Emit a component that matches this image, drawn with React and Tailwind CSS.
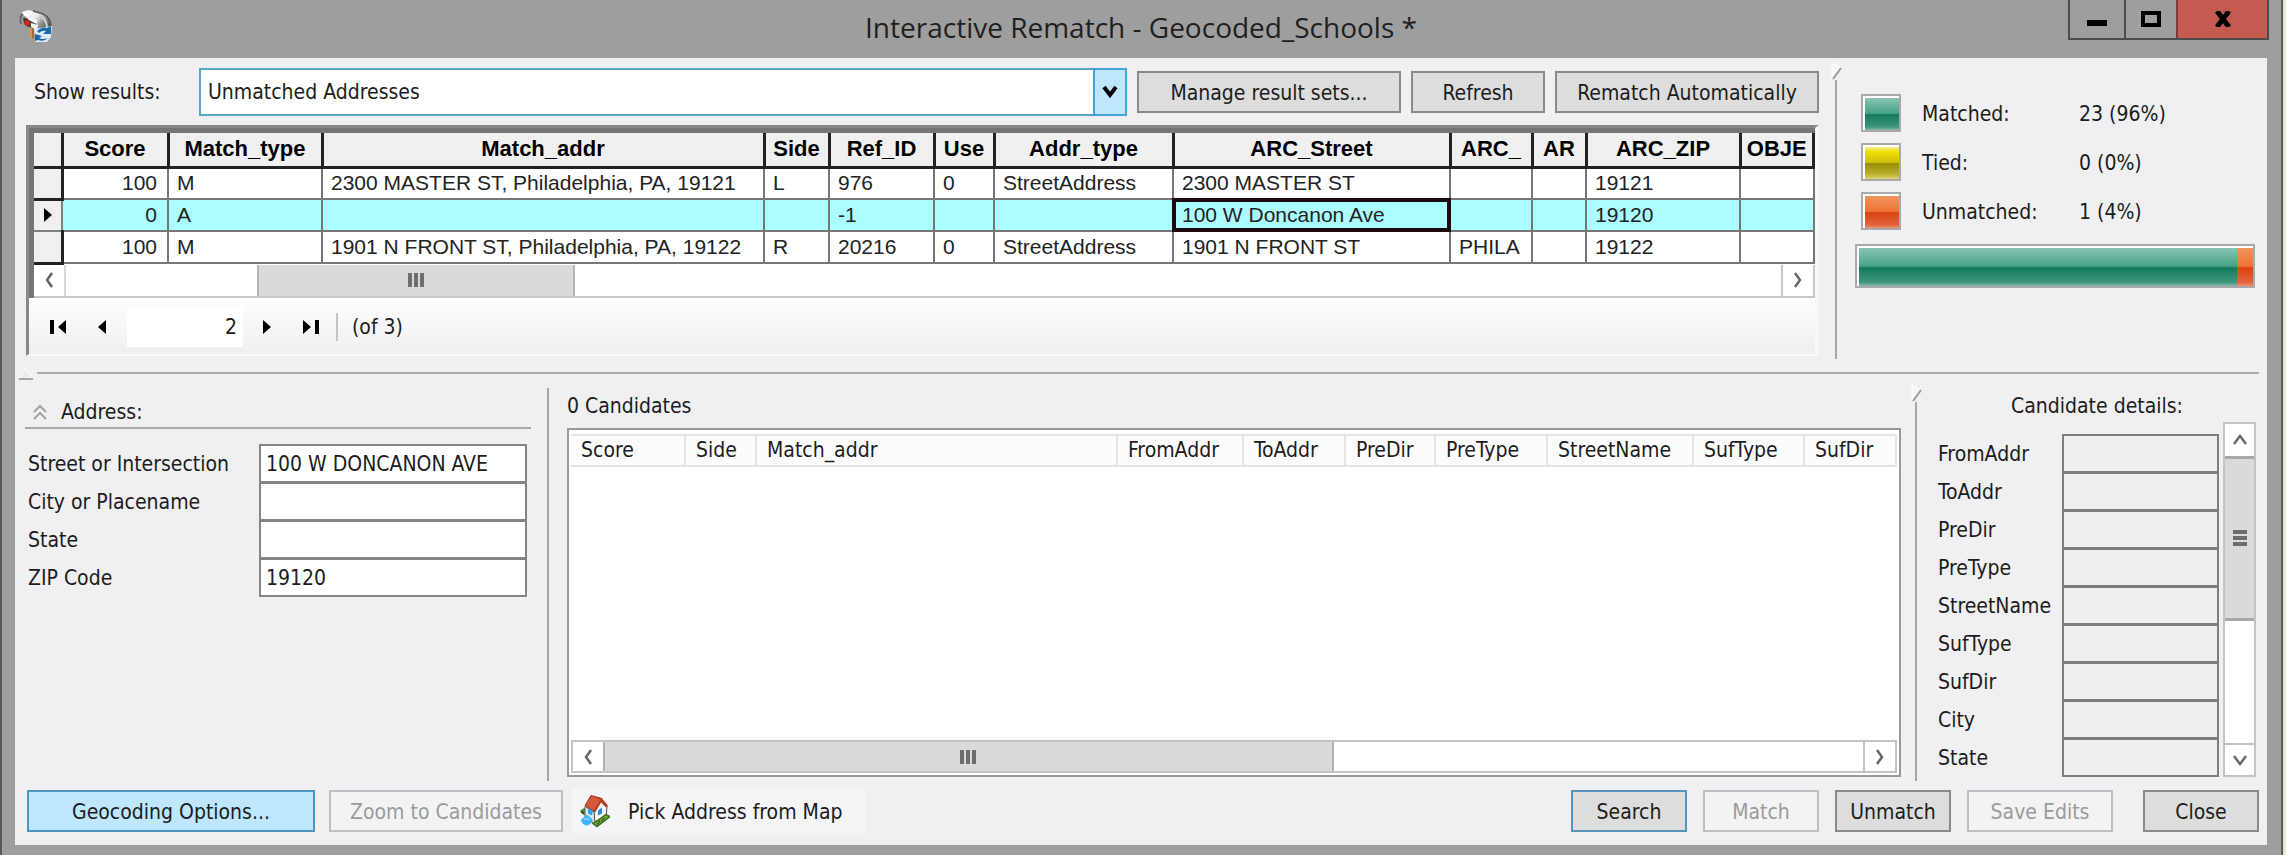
import React from "react";

const ui = "font-['DejaVu_Sans_Condensed','DejaVu_Sans',sans-serif]";

const COLUMNS = [
  { label: "Score", width: "w-[106px]" },
  { label: "Match_type", width: "w-[154px]" },
  { label: "Match_addr", width: "w-[442px]" },
  { label: "Side", width: "w-[65px]" },
  { label: "Ref_ID", width: "w-[105px]" },
  { label: "Use", width: "w-[60px]" },
  { label: "Addr_type", width: "w-[179px]" },
  { label: "ARC_Street", width: "w-[277px]" },
  { label: "ARC_", width: "w-[82px]" },
  { label: "AR", width: "w-[54px]" },
  { label: "ARC_ZIP", width: "w-[154px]" },
  { label: "OBJE", width: "" },
];

const ROWS = [
  ["100", "M", "2300 MASTER ST, Philadelphia, PA, 19121", "L", "976", "0", "StreetAddress", "2300 MASTER ST", "", "", "19121", ""],
  ["0", "A", "", "", "-1", "", "", "100 W Doncanon Ave", "", "", "19120", ""],
  ["100", "M", "1901 N FRONT ST, Philadelphia, PA, 19122", "R", "20216", "0", "StreetAddress", "1901 N FRONT ST", "PHILA", "", "19122", ""],
];

const CANDIDATE_COLUMNS = [
  { label: "Score", width: "w-[114px]" },
  { label: "Side", width: "w-[71px]" },
  { label: "Match_addr", width: "" },
  { label: "FromAddr", width: "w-[126px]" },
  { label: "ToAddr", width: "w-[102px]" },
  { label: "PreDir", width: "w-[90px]" },
  { label: "PreType", width: "w-[112px]" },
  { label: "StreetName", width: "w-[146px]" },
  { label: "SufType", width: "w-[111px]" },
  { label: "SufDir", width: "w-[92px]" },
];

const DETAILS = ["FromAddr", "ToAddr", "PreDir", "PreType", "StreetName", "SufType", "SufDir", "City", "State"];

const ADDRESS_FIELDS = [
  { id: "street", label: "Street or Intersection", value: "100 W DONCANON AVE" },
  { id: "city", label: "City or Placename", value: "" },
  { id: "state", label: "State", value: "" },
  { id: "zip", label: "ZIP Code", value: "19120" },
];

const GREEN = "bg-[linear-gradient(to_bottom,#8ac2b3_0%,#45a387_48%,#14795e_52%,#3d967e_90%,#86b9aa_100%)]";
const YELLOW = "bg-[linear-gradient(to_bottom,#f0ee90_0%,#efdf08_14%,#cfbf0c_48%,#978c06_52%,#bdb02a_85%,#dcd47c_100%)]";
const ORANGE = "bg-[linear-gradient(to_bottom,#f0945c_0%,#ef7434_48%,#da4312_52%,#e4633a_90%,#ea9070_100%)]";

const STATS = [
  { label: "Matched:", value: "23 (96%)", fill: GREEN },
  { label: "Tied:", value: "0 (0%)", fill: YELLOW },
  { label: "Unmatched:", value: "1 (4%)", fill: ORANGE },
];

const BUTTON_TONES = {
  normal: "border-[#8a8a8a] bg-[#dddddd]",
  primary: "border-[#5994ba] bg-[#dddddd]",
  hot: "border-[#4f93bf] bg-[#bee6fd]",
};

function MailboxIcon() {
  return (
    <svg viewBox="0 0 34 34" className="h-[34px] w-[34px]" aria-hidden="true">
      <defs>
        <linearGradient id="mailbox-body" x1="0" y1="0" x2="1" y2="0.7">
          <stop offset="0" stopColor="#ffffff" />
          <stop offset="0.45" stopColor="#ececec" />
          <stop offset="0.75" stopColor="#8a8a8a" />
          <stop offset="1" stopColor="#4a4a4a" />
        </linearGradient>
      </defs>
      <path d="M10 18 H16 V30 L10 28 Z" fill="#c99a5c" />
      <path d="M13 18 H16 V30 L13 29 Z" fill="#a06f38" />
      <path d="M4 3 Q8 0 14 2 L24 5 Q33 9 32 21 L31 23 L17 21 L9 16 Q10 8 4 3 Z" fill="url(#mailbox-body)" />
      <path d="M14 2 L24 5 Q33 9 32 21" fill="none" stroke="#5a5a5a" strokeWidth="1.500" />
      <path d="M23 8 Q28 12 28 19" fill="none" stroke="#d5d5d5" strokeWidth="2" />
      <path d="M3 4 Q8 5 10 10 L18 13" fill="none" stroke="#ffffff" strokeWidth="3" />
      <path d="M2 15 Q0 7 4 5" fill="none" stroke="#6a6a6a" strokeWidth="2" />
      <path d="M4 9 Q8 8 10 11 L17 15 L16 19 L9 18 L5 15 Z" fill="#4b4140" />
      <path d="M12 14 L19 16 L18 21 L12 18 Z" fill="#f2f2f2" />
      <circle cx="8" cy="14" r="2.500" fill="#e3221a" />
      <path d="M15 20 L33 17 L32 28 L28 33 L16 33 Z" fill="#dcebf6" />
      <path d="M18 22 Q23 17 28 19 L32 17 V25 H24 L27 22 Q23 21 20 24 Z" fill="#2068ac" />
      <path d="M16 25 L23 27 L20 29 Q24 31 29 29 Q25 33 19 31 L16 32 Z" fill="#1b64ab" />
    </svg>
  );
}

function HouseIcon() {
  return (
    <svg viewBox="0 0 30 33" className="h-[34px] w-[30px]" aria-hidden="true">
      <path d="M0 16 L5 13 L8 19 L4 21 Z" fill="#55902d" />
      <path d="M1 17 L4 19" stroke="#275213" strokeWidth="2" />
      <path d="M5 12 L15 18 L16 30 L5 24 Z" fill="#dfe6ec" stroke="#666" strokeWidth="1" />
      <path d="M14 17 L21 6 L27 12 L26 23 L15 29 Z" fill="#f7f7f8" stroke="#4a4a4a" strokeWidth="1" />
      <path d="M5 11 L11 1 L22 4 L15 17 Z" fill="#d9583a" stroke="#96351d" strokeWidth="1" />
      <path d="M11 1 L22 4 L28 11 L26 13 L21 8 L15 18 L14 16 L20 5 Z" fill="#b23f26" />
      <path d="M18 16 L22 13 L22 19 L18 21 Z" fill="#2a8ede" />
      <path d="M8 14 L13 16 L12 21 L8 19 Z" fill="#2f9fe6" />
      <path d="M13 29 L26 20 L30 22 L17 32 Z" fill="#6fa838" stroke="#3c6b20" strokeWidth="1.500" />
      <path d="M17 30 L20 26 M22 27 L24 23" stroke="#3c6b20" strokeWidth="1.500" />
      <path d="M7 20 Q11 23 13 26 Q10 31 6 31 Q1 29 1 25 Z" fill="#3bb4fa" />
      <path d="M4 25 Q8 23 9 26" fill="none" stroke="#7dd2ff" strokeWidth="2" />
    </svg>
  );
}

function Arrow({ d, label }) {
  return (
    <svg viewBox="0 0 16 16" className="h-4 w-4" role="img" aria-label={label}>
      <path d={d} fill="none" stroke="#666" strokeWidth="2.500" />
    </svg>
  );
}

const LEFT = "M11 1 L6 8 L11 15";
const RIGHT = "M5 1 L10 8 L5 15";
const UP = "M2 12 L8 4 L14 12";
const DOWN = "M2 4 L8 12 L14 4";

function Button({ children, className, tone = "normal", ...props }) {
  return (
    <button
      type="button"
      className={`h-[42px] shrink-0 border-2 pt-[2px] text-center whitespace-nowrap disabled:border-[#bcc0c2] disabled:bg-[#f3f3f4] disabled:text-[#9b9b9b] ${BUTTON_TONES[tone]} ${className}`}
      {...props}
    >
      {children}
    </button>
  );
}

function VerticalSplitter({ arrow }) {
  return (
    <div className="flex w-3 shrink-0 flex-col items-center">
      {arrow && (
        <svg viewBox="0 0 12 18" className="h-[18px] w-3" aria-hidden="true">
          <path d="M2 1 L11 6 L2 17 Z" fill="#f6f6f6" stroke="#fff" strokeWidth="1" />
          <path d="M11 6 L3 17" stroke="#9a9a9a" strokeWidth="2" />
        </svg>
      )}
      <div className="w-[2px] grow bg-[#a6a6a6]" />
    </div>
  );
}

function Grip({ vertical }) {
  return (
    <span className={vertical ? "flex flex-col gap-[2px]" : "flex gap-[2px]"}>
      {[0, 1, 2].map((i) => (
        <span key={i} className={vertical ? "h-1 w-[14px] bg-[#6d6d6d]" : "h-[14px] w-1 bg-[#6d6d6d]"} />
      ))}
    </span>
  );
}

function TitleBar() {
  return (
    <header className="flex h-[58px] items-start pr-3">
      <div className="w-[212px] pt-[9px] pl-[17px]">
        <MailboxIcon />
      </div>
      <h1 className="grow pt-[3px] text-center font-['Open_Sans',sans-serif] text-[28px] leading-[48px] text-[#1f1f1f]">
        Interactive Rematch - Geocoded_Schools *
      </h1>
      <div className="flex h-10 w-[201px] border-2 border-t-0 border-[#4c4c4c]">
        <button type="button" aria-label="Minimize" className="flex w-14 items-center justify-center border-r-2 border-[#4c4c4c]">
          <span className="mt-2 h-[6px] w-5 bg-black" />
        </button>
        <button type="button" aria-label="Maximize" className="flex w-[52px] items-center justify-center border-r-2 border-[#7a3a36]">
          <span className="h-4 w-5 border-4 border-black" />
        </button>
        <button type="button" aria-label="Close window" className="flex grow items-center justify-center bg-[#c55a50]">
          <svg viewBox="0 0 18 16" className="h-4 w-[18px]" aria-hidden="true">
            <path d="M3 0 L15 16 M15 0 L3 16" stroke="#000" strokeWidth="5" />
          </svg>
        </button>
      </div>
    </header>
  );
}

function Toolbar() {
  return (
    <div className="flex h-12 items-center gap-[10px] pl-2">
      <label htmlFor="results" className="w-[155px] shrink-0">Show results:</label>
      <div className="relative h-12 grow">
        <select id="results" className="h-full w-full appearance-none border-2 border-[#55a8cc] bg-white pl-[7px] outline-none">
          <option>Unmatched Addresses</option>
        </select>
        <span className="pointer-events-none absolute inset-y-0 right-0 flex w-[34px] items-center justify-center border-2 border-[#42a5dc] bg-[#bee6fd]">
          <svg viewBox="0 0 16 14" className="h-[14px] w-4" aria-hidden="true">
            <path d="M2 2 L8 10 L14 2" fill="none" stroke="#000" strokeWidth="4" />
          </svg>
        </span>
      </div>
      <Button className="w-[264px]">Manage result sets...</Button>
      <Button className="w-[134px]">Refresh</Button>
      <Button className="w-[264px]">Rematch Automatically</Button>
    </div>
  );
}

function ResultsTable() {
  return (
    <table className="w-full table-fixed border-collapse bg-white font-['Liberation_Sans',Arial,sans-serif] text-[21px] leading-[28px] text-[#222]">
      <thead>
        <tr className="h-[34px]">
          <th className="w-7 border-r-3 border-b-3 border-[#222] bg-[#f0f0f0]" aria-label="Row" />
          {COLUMNS.map((c) => (
            <th
              key={c.label}
              scope="col"
              className={`${c.width} border-r-3 border-b-3 border-[#222] bg-[#f0f0f0] p-0 text-center text-[22px] font-bold whitespace-nowrap text-black`}
            >
              {c.label}
            </th>
          ))}
        </tr>
      </thead>
      <tbody>
        {ROWS.map((row, r) => (
          <tr key={r} className="h-8">
            <th
              scope="row"
              className={
                r === 1
                  ? "border-r-2 border-b-2 border-[#808080] bg-[#f0f0f0] p-0"
                  : "border-r-3 border-b-3 border-[#222] bg-[#f0f0f0] p-0"
              }
            >
              {r === 1 && (
                <svg viewBox="0 0 10 14" className="mx-auto h-[14px] w-[10px]" role="img" aria-label="Current row">
                  <path d="M1 0 L9 7 L1 14 Z" fill="#000" />
                </svg>
              )}
            </th>
            {row.map((cell, c) => (
              <td
                key={c}
                className={`overflow-hidden border-r-2 border-b-2 border-[#777] p-0 whitespace-nowrap ${
                  c === 0 ? "pr-[10px] text-right" : "pl-2"
                } ${r === 1 ? "bg-[#abfdff]" : "bg-white"} ${
                  r === 1 && c === 7 ? "outline-4 -outline-offset-3 outline-[#1c0a0c]" : ""
                }`}
              >
                {cell}
              </td>
            ))}
          </tr>
        ))}
      </tbody>
    </table>
  );
}

function NavButton({ label, d, className }) {
  return (
    <button type="button" aria-label={label} className={`flex h-10 shrink-0 items-center justify-center ${className}`}>
      <svg viewBox="0 0 18 16" className="h-4 w-[18px]" aria-hidden="true">
        <path d={d} fill="#000" />
      </svg>
    </button>
  );
}

function ResultsGrid() {
  return (
    <div className="mt-[9px] border-t-3 border-r-4 border-b-2 border-l-3 border-t-[#878787] border-r-[#f8f8f8] border-b-[#fafafa] border-l-[#888]">
      <div className="border-t-5 border-l-5 border-[#757575]">
        <ResultsTable />
        <div className="flex h-[33px] border-b-2 border-[#c8c8c8] bg-white">
          <button type="button" className="flex w-8 items-center justify-center border-r-2 border-[#d8d8d8]">
            <Arrow d={LEFT} label="Scroll left" />
          </button>
          <div className="flex grow pl-[191px]">
            <div className="flex w-[318px] items-center justify-center border-x-2 border-[#b4b4b4] bg-[#dadada]">
              <Grip />
            </div>
          </div>
          <button type="button" className="flex w-[34px] items-center justify-center border-x-2 border-[#c8c8c8]">
            <Arrow d={RIGHT} label="Scroll right" />
          </button>
        </div>
      </div>
      <div className="flex h-14 items-center bg-linear-to-b from-white to-[#efeef0] pt-[3px] pl-[21px]">
        <NavButton label="First record" d="M0 1 H4 V15 H0 Z M16 1 V15 L8 8 Z" className="w-[18px]" />
        <NavButton label="Previous record" d="M13 1 V15 L5 8 Z" className="ml-[25px] w-[18px]" />
        <input aria-label="Current record" defaultValue="2" className="ml-[16px] h-10 w-[116px] bg-white pr-[6px] text-right outline-none" />
        <NavButton label="Next record" d="M5 1 V15 L13 8 Z" className="ml-[15px] w-[18px]" />
        <NavButton label="Last record" d="M2 1 V15 L10 8 Z M14 1 H18 V15 H14 Z" className="ml-[25px] w-[18px]" />
        <span className="ml-[17px] h-7 w-[2px] bg-[#c4c4c4]" />
        <span className="ml-[14px]">(of 3)</span>
      </div>
    </div>
  );
}

function Statistics() {
  return (
    <section className="w-[425px] shrink-0 pt-9 pr-3 pl-[13px]">
      <div className="flex flex-col gap-[11px] pl-[6px]">
        {STATS.map((s) => (
          <div key={s.label} className="flex h-[38px] items-center">
            <span className="h-[38px] w-10 shrink-0 border-2 border-[#a9a9a9] bg-white pt-[2px] pl-[2px]">
              <span className={`block h-full w-full ${s.fill}`} />
            </span>
            <span className="w-[157px] pt-[2px] pl-[21px]">{s.label}</span>
            <span className="pt-[2px] pl-[21px]">{s.value}</span>
          </div>
        ))}
      </div>
      <div className="mt-[14px] flex h-11 border-2 border-[#a9a9a9] bg-white pt-[2px] pl-[2px]">
        <div className={`grow ${GREEN}`} />
        <div className={`w-[16px] ${ORANGE}`} />
      </div>
    </section>
  );
}

function AddressPanel() {
  return (
    <section className="w-[527px] shrink-0 pr-[11px] pl-[10px]">
      <div className="mt-[17px] flex h-8 items-center border-b-2 border-[#a9a9a9] pl-[8px]">
        <svg viewBox="0 0 14 16" className="h-4 w-[14px]" aria-hidden="true">
          <path d="M1 8 L7 2 L13 8 M1 15 L7 9 L13 15" fill="none" stroke="#a5a5a5" strokeWidth="2" />
        </svg>
        <h2 className="ml-[14px]">Address:</h2>
      </div>
      <div className="mt-[15px] pr-1 pl-[3px]">
        {ADDRESS_FIELDS.map((f) => (
          <div key={f.id} className="flex h-[38px]">
            <label htmlFor={f.id} className="grow leading-[40px]">{f.label}</label>
            <input
              id={f.id}
              defaultValue={f.value}
              className="h-[39px] w-[268px] border-2 border-[#858585] bg-white pt-[2px] pl-[5px] outline-none"
            />
          </div>
        ))}
      </div>
    </section>
  );
}

function Candidates() {
  return (
    <section className="mr-[9px] ml-[13px] flex min-w-0 grow flex-col pb-1">
      <h2 className="mt-3 leading-[28px]">0 Candidates</h2>
      <div className="mt-2 flex grow flex-col border-2 border-[#999] bg-white px-[2px] pt-1 pb-[2px]">
        <table className="w-full table-fixed border-collapse">
          <thead>
            <tr className="h-[31px]">
              {CANDIDATE_COLUMNS.map((c) => (
                <th
                  key={c.label}
                  scope="col"
                  className={`${c.width} border-2 border-l-0 border-[#e4e4e4] bg-[#fcfcfc] p-0 pl-[10px] text-left font-normal whitespace-nowrap`}
                >
                  {c.label}
                </th>
              ))}
            </tr>
          </thead>
        </table>
        <div className="mt-auto flex h-[33px] border-2 border-[#c4c4c4]">
          <button type="button" className="flex w-[30px] items-center justify-center">
            <Arrow d={LEFT} label="Scroll left" />
          </button>
          <div className="flex grow">
            <div className="flex w-[58%] items-center justify-center border-x-2 border-[#b0b0b0] bg-[#dadada]">
              <Grip />
            </div>
          </div>
          <button type="button" className="flex w-8 items-center justify-center border-l-2 border-[#c4c4c4]">
            <Arrow d={RIGHT} label="Scroll right" />
          </button>
        </div>
      </div>
    </section>
  );
}

function CandidateDetails() {
  return (
    <section className="flex w-[345px] shrink-0 flex-col pr-[11px] pb-1 pl-4">
      <h2 className="mt-3 text-center leading-[28px]">Candidate details:</h2>
      <div className="flex grow">
        <div className="grow pt-[14px]">
          {DETAILS.map((d) => (
            <div key={d} className="flex h-[38px]">
              <label htmlFor={`detail-${d}`} className="grow leading-[40px]">{d}</label>
              <input
                id={`detail-${d}`}
                readOnly
                className="h-[39px] w-[157px] border-2 border-[#7d7d7d] bg-[#efeef0] outline-none"
              />
            </div>
          ))}
        </div>
        <div className="mt-[2px] ml-1 flex w-[33px] flex-col border-2 border-[#c4c4c4] bg-white">
          <button type="button" className="flex h-8 items-center justify-center">
            <Arrow d={UP} label="Scroll up" />
          </button>
          <div className="flex h-[165px] items-center justify-center border-y-3 border-[#a8a8a8] bg-[#dadada]">
            <Grip vertical />
          </div>
          <button type="button" className="mt-auto flex h-8 items-center justify-center border-t-2 border-[#c4c4c4]">
            <Arrow d={DOWN} label="Scroll down" />
          </button>
        </div>
      </div>
    </section>
  );
}

function Footer() {
  return (
    <footer className="flex items-center px-2 pt-2 pb-3 pl-3">
      <Button tone="hot" className="w-[288px]">Geocoding Options...</Button>
      <Button className="ml-[14px] w-[234px]" disabled>Zoom to Candidates</Button>
      <button type="button" className="ml-[9px] flex h-11 w-[293px] items-center bg-[#f5f4f6] pl-2">
        <HouseIcon />
        <span className="ml-[18px] pt-[2px]">Pick Address from Map</span>
      </button>
      <div className="ml-auto flex gap-4">
        <Button tone="primary" className="w-[116px]">Search</Button>
        <Button className="w-[116px]" disabled>Match</Button>
        <Button className="w-[116px]">Unmatch</Button>
        <Button className="w-[146px]" disabled>Save Edits</Button>
        <Button className="ml-[14px] w-[116px]">Close</Button>
      </div>
    </footer>
  );
}

export default function App() {
  return (
    <div className="min-h-screen bg-[#e9e4d4] pr-[3px]">
      <div className={`${ui} flex min-h-screen flex-col border-r-2 border-l-2 border-[#5c5854] bg-[#9e9e9e] text-[21px] leading-[28px] text-[#1c1c1c]`}>
        <TitleBar />
        <main className="mr-[14px] mb-[10px] ml-[13px] flex grow flex-col bg-[#f0eff1]">
          <div className="flex">
            <section className="min-w-0 grow pt-[10px] pb-[10px] pl-[11px]">
              <Toolbar />
              <ResultsGrid />
            </section>
            <div className="ml-[11px] flex pt-1 pb-[7px]">
              <VerticalSplitter arrow />
            </div>
            <Statistics />
          </div>
          <div className="flex h-[14px] shrink-0 items-center pr-2 pl-1">
            <svg viewBox="0 0 14 14" className="h-[14px] w-[14px]" aria-hidden="true">
              <path d="M7 2 L13 12 L1 12 Z" fill="#e9e9e9" stroke="#fff" strokeWidth="1" />
              <path d="M0 13 H14" stroke="#a6a6a6" strokeWidth="2" />
            </svg>
            <div className="ml-1 h-[2px] grow bg-[#ababab]" />
          </div>
          <div className="flex grow">
            <AddressPanel />
            <div className="flex pt-2">
              <VerticalSplitter />
            </div>
            <Candidates />
            <div className="flex pt-1">
              <VerticalSplitter arrow />
            </div>
            <CandidateDetails />
          </div>
          <Footer />
        </main>
      </div>
    </div>
  );
}
